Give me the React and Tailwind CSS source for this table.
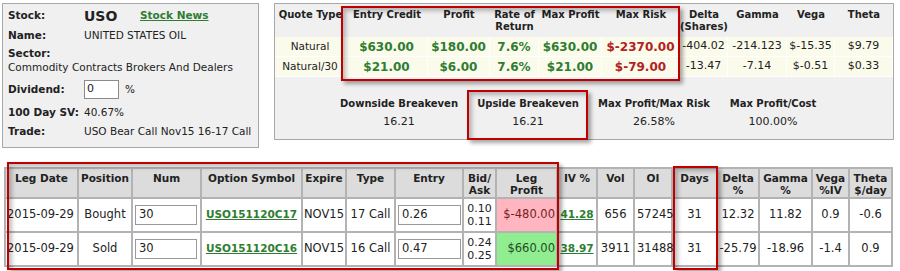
import React from "react";

const G = "text-[#2e7d32]";

function LeftPanel() {
  return (
    <div className="ml-[2px] mt-[3px] w-[257px] h-[145px] shrink-0 border border-[#a8a8a8] bg-[#f0f0f0] pl-[5px] pt-[3px] text-[10.5px] text-[#222]">
      <div className="flex h-[18px] items-center">
        <div className="w-[76px] font-bold">Stock:</div>
        <div className="w-[56px] text-[14px] font-bold">USO</div>
        <a className={`font-bold underline ${G}`}>Stock News</a>
      </div>
      <div className="flex h-[22px] items-center">
        <div className="w-[76px] font-bold">Name:</div>
        <div>UNITED STATES OIL</div>
      </div>
      <div className="flex h-[14px] items-center font-bold">Sector:</div>
      <div className="flex h-[14px] items-center">Commodity Contracts Brokers And Dealers</div>
      <div className="mt-[4px] flex h-[21px] items-center">
        <div className="w-[76px] font-bold">Dividend:</div>
        <div className="flex h-[19px] w-[35px] items-center border border-[#8a8a8a] bg-white pl-[2px] text-[11px]">0</div>
        <div className="ml-[6px]">%</div>
      </div>
      <div className="flex h-[25px] items-center">
        <div className="w-[76px] font-bold">100 Day SV:</div>
        <div>40.67%</div>
      </div>
      <div className="flex h-[14px] items-center">
        <div className="w-[76px] font-bold">Trade:</div>
        <div>USO Bear Call Nov15 16-17 Call</div>
      </div>
    </div>
  );
}

const topHeaders = [
  ["Quote Type"],
  ["Entry Credit"],
  ["Profit"],
  ["Rate of", "Return"],
  ["Max Profit"],
  ["Max Risk"],
  ["Delta", "(Shares)"],
  ["Gamma"],
  ["Vega"],
  ["Theta"],
];
const topRows = [
  ["Natural", "$630.00", "$180.00", "7.6%", "$630.00", "$-2370.00", "-404.02", "-214.123", "$-15.35", "$9.79"],
  ["Natural/30", "$21.00", "$6.00", "7.6%", "$21.00", "$-79.00", "-13.47", "-7.14", "$-0.51", "$0.33"],
];

function RightPanel() {
  const tmpl = "grid grid-cols-[71px_82px_62px_49px_63px_78px_48px_59px_48px_58px]";
  return (
    <div className="ml-[15px] mt-[3px] w-[620px] h-[137px] shrink-0 border border-[#a8a8a8] bg-[#f0f0f0] text-[#222]">
      <div className={`${tmpl} h-[33px]`}>
        {topHeaders.map((h, i) => (
          <div key={i} className="pt-[5px] text-center text-[10px] font-bold leading-[12px] whitespace-nowrap">
            {h.map((l, j) => (
              <div key={j}>{l}</div>
            ))}
          </div>
        ))}
      </div>
      {topRows.map((r, ri) => (
        <div key={ri} className={`${tmpl} h-[20px]`}>
          {r.map((v, i) => {
            let cls = "text-[11px]";
            if (i >= 1 && i <= 4) cls = `text-[12px] font-bold ${G}`;
            if (i === 5) cls = "text-[12px] font-bold text-[#b22222]";
            if (i === 0) cls = "text-[10.5px]";
            return (
              <div
                key={i}
                className={`flex items-center justify-center whitespace-nowrap border-r border-b border-white bg-[#fbfbec] ${cls}`}
              >
                {v}
              </div>
            );
          })}
        </div>
      ))}
      <div className="ml-[60px] mt-[19px] flex text-[10px]">
        {[
          [128, "Downside Breakeven", "16.21"],
          [130, "Upside Breakeven", "16.21"],
          [122, "Max Profit/Max Risk", "26.58%"],
          [116, "Max Profit/Cost", "100.00%"],
        ].map(([w, l, v], i) => (
          <div key={i} style={{ width: w }} className="flex flex-col items-center">
            <div className="flex h-[14px] items-center font-bold whitespace-nowrap">{l}</div>
            <div className="mt-[5px] flex h-[14px] items-center text-[11px]">{v}</div>
          </div>
        ))}
      </div>
    </div>
  );
}

const botHeaders = [
  ["Leg Date"],
  ["Position"],
  ["Num"],
  ["Option Symbol"],
  ["Expire"],
  ["Type"],
  ["Entry"],
  ["Bid/", "Ask"],
  ["Leg", "Profit"],
  ["IV %"],
  ["Vol"],
  ["OI"],
  ["Days"],
  ["Delta", "%"],
  ["Gamma", "%"],
  ["Vega", "%IV"],
  ["Theta", "$/day"],
];

const legs = [
  {
    date: "2015-09-29",
    pos: "Bought",
    num: "30",
    sym: "USO151120C17",
    exp: "NOV15",
    type: "17 Call",
    entry: "0.26",
    bid: "0.10",
    ask: "0.11",
    profit: "$-480.00",
    pbg: "bg-[#ffb6c1]",
    ptx: "text-[#7a1c1c]",
    iv: "41.28",
    vol: "656",
    oi: "57245",
    days: "31",
    delta: "12.32",
    gamma: "11.82",
    vega: "0.9",
    theta: "-0.6",
  },
  {
    date: "2015-09-29",
    pos: "Sold",
    num: "30",
    sym: "USO151120C16",
    exp: "NOV15",
    type: "16 Call",
    entry: "0.47",
    bid: "0.24",
    ask: "0.25",
    profit: "$660.00",
    pbg: "bg-[#90ee90]",
    ptx: "text-[#1f4d1f]",
    iv: "38.97",
    vol: "3911",
    oi: "31488",
    days: "31",
    delta: "-25.79",
    gamma: "-18.96",
    vega: "-1.4",
    theta: "0.9",
  },
];

function LegTable() {
  const tmpl =
    "grid grid-cols-[73px_54px_69px_101px_44px_49px_68px_33px_61px_40px_37px_38px_45px_42px_53px_37px_43px]";
  const cell = "border-r-2 border-b-2 border-[#b3b3b3]";
  const dc = `${cell} flex items-center whitespace-nowrap bg-white text-[11.5px] text-[#222]`;
  return (
    <div className="ml-[4px] mt-[19px] w-[889px] border-l-2 border-t-2 border-[#b3b3b3]">
      <div className={`${tmpl} h-[30px]`}>
        {botHeaders.map((h, i) => (
          <div
            key={i}
            className={`${cell} bg-[#dcdcdc] pt-[3px] text-center text-[10.5px] font-bold leading-[12px] whitespace-nowrap text-[#222]`}
          >
            {h.map((l, j) => (
              <div key={j}>{l}</div>
            ))}
          </div>
        ))}
      </div>
      {legs.map((r, ri) => (
        <div key={ri} className={`${tmpl} h-[34px]`}>
          <div className={`${dc} pl-[1px]`}>{r.date}</div>
          <div className={`${dc} justify-center`}>{r.pos}</div>
          <div className={`${dc} pl-[2px]`}>
            <div className="flex h-[20px] w-[62px] items-center border border-[#999] bg-white pl-[3px]">{r.num}</div>
          </div>
          <div className={`${dc} justify-center`}>
            <a className={`font-bold underline text-[10.5px] ${G}`}>{r.sym}</a>
          </div>
          <div className={`${dc} justify-center`}>{r.exp}</div>
          <div className={`${dc} justify-center`}>{r.type}</div>
          <div className={`${dc} pl-[2px]`}>
            <div className="flex h-[20px] w-[63px] items-center border border-[#999] bg-white pl-[3px]">{r.entry}</div>
          </div>
          <div className={`${cell} flex flex-col items-center justify-center whitespace-nowrap bg-white text-[11px] leading-[13px] text-[#222]`}>
            <div>{r.bid}</div>
            <div>{r.ask}</div>
          </div>
          <div className={`${cell} flex items-center justify-end pr-[1px] whitespace-nowrap text-[11.5px] ${r.pbg} ${r.ptx}`}>
            {r.profit}
          </div>
          <div className={`${dc} justify-center`}>
            <a className={`font-bold underline text-[10.5px] ${G}`}>{r.iv}</a>
          </div>
          <div className={`${dc} justify-center`}>{r.vol}</div>
          <div className={`${dc} pl-[2px]`}>{r.oi}</div>
          <div className={`${dc} justify-center`}>{r.days}</div>
          <div className={`${dc} justify-center`}>{r.delta}</div>
          <div className={`${dc} justify-center`}>{r.gamma}</div>
          <div className={`${dc} justify-center`}>{r.vega}</div>
          <div className={`${dc} justify-center`}>{r.theta}</div>
        </div>
      ))}
    </div>
  );
}

const boxShadow =
  "shadow-[3px_3px_4px_rgba(0,0,0,0.35),inset_3px_3px_4px_rgba(0,0,0,0.25)]";

export default function App() {
  return (
    <div className="relative h-[271px] w-[900px] overflow-hidden bg-white font-['DejaVu_Sans',sans-serif]">
      <div className="flex items-start">
        <LeftPanel />
        <RightPanel />
      </div>
      <LegTable />
      {/* annotation boxes */}
      <div className={`pointer-events-none absolute left-[341px] top-[6px] h-[75px] w-[339px] border-2 border-[#c00000] ${boxShadow}`} />
      <div className={`pointer-events-none absolute left-[467px] top-[90px] h-[50px] w-[121px] border-2 border-[#c00000] ${boxShadow}`} />
      <div className={`pointer-events-none absolute left-[7px] top-[162px] h-[108px] w-[552px] border-2 border-[#c00000] ${boxShadow}`} />
      <div className={`pointer-events-none absolute left-[673px] top-[166px] h-[104px] w-[45px] border-2 border-[#c00000] ${boxShadow}`} />
    </div>
  );
}
